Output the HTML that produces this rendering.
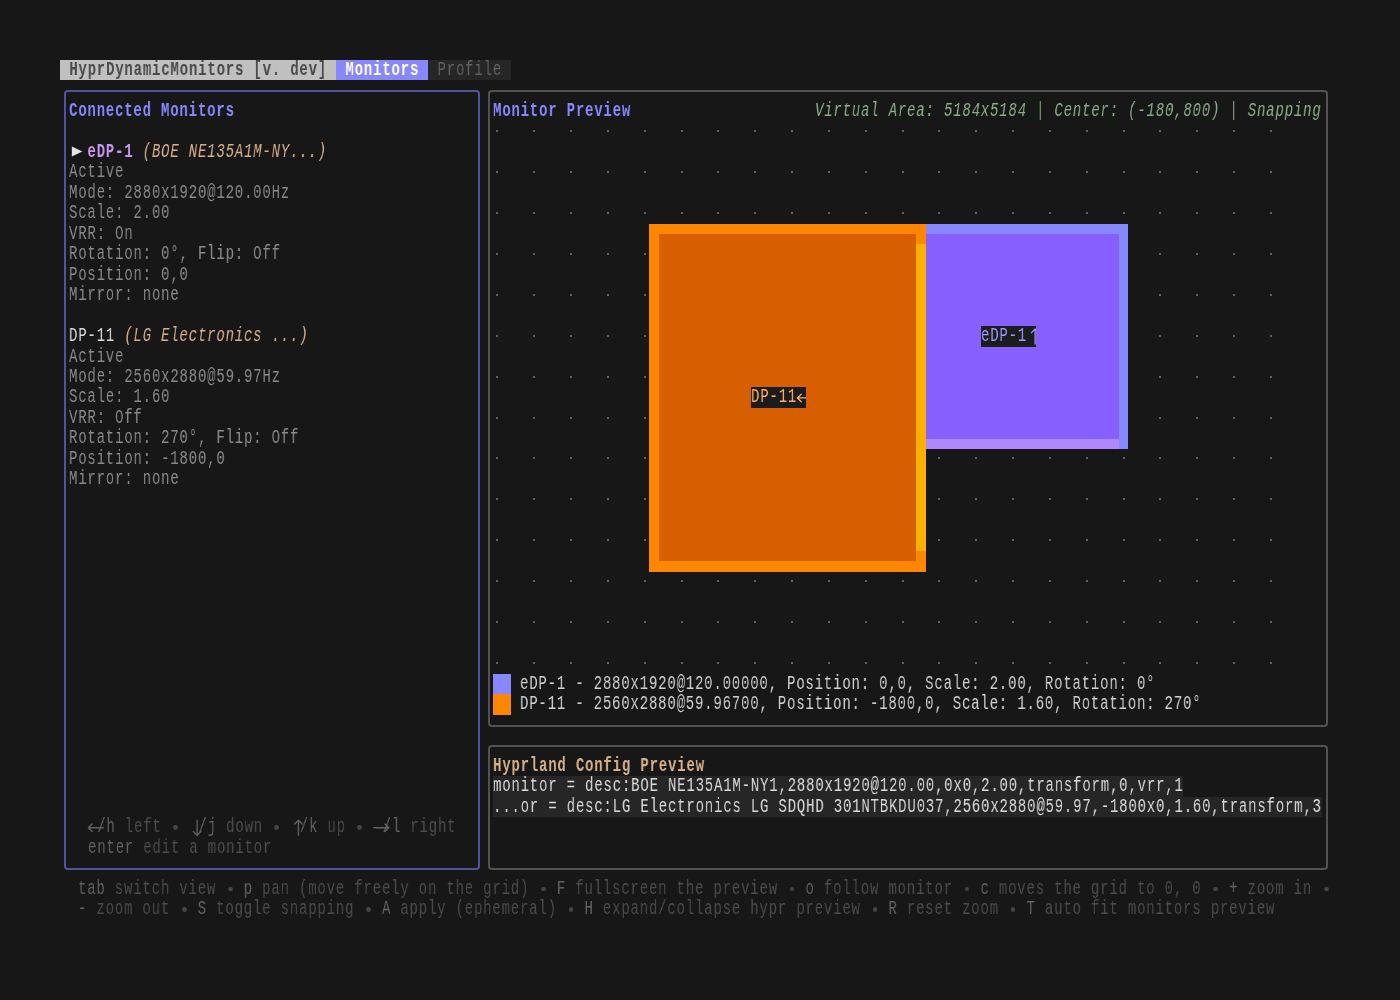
<!DOCTYPE html>
<html><head><meta charset="utf-8"><style>
html,body{margin:0;padding:0;}
body{width:1400px;height:1000px;overflow:hidden;background:#171717;position:relative;}
.r{position:absolute;}
.t{position:absolute;white-space:pre;font-family:"Liberation Mono",monospace;font-size:20.0px;line-height:20.465px;height:20.465px;transform:scaleX(0.70000);letter-spacing:1.1532px;transform-origin:0 0;will-change:transform;}
.bx{position:absolute;box-sizing:border-box;border:2px solid;border-radius:4px;}
.a{position:absolute;left:0;top:0;}
.d{position:absolute;width:2px;height:2px;background:#626262;}
</style></head><body>
<div class="r" style="left:60.00px;top:60.00px;width:276.26px;height:20.47px;background:#c0c0c0;"></div>
<div class="r" style="left:336.26px;top:60.00px;width:92.09px;height:20.47px;background:#8787ff;"></div>
<div class="r" style="left:428.35px;top:60.00px;width:82.88px;height:20.47px;background:#262626;"></div>
<div class="t" style="left:59.90px;top:60.00px;"><span style="color:#4a4a4a;font-weight:bold;"> HyprDynamicMonitors [v. dev] </span><span style="color:#ffffff;font-weight:bold;"> Monitors </span><span style="color:#626262;"> Profile </span></div>
<div class="bx" style="left:64.00px;top:90.10px;width:416.39px;height:779.67px;border-color:#5252a0;"></div>
<div class="bx" style="left:487.60px;top:90.10px;width:839.99px;height:636.42px;border-color:#525252;"></div>
<div class="bx" style="left:487.60px;top:744.98px;width:839.99px;height:124.79px;border-color:#525252;"></div>
<div class="t" style="left:69.11px;top:100.93px;"><span style="color:#8787ff;font-weight:bold;">Connected Monitors</span></div>
<svg class="a" width="1400" height="1000"><path d="M71.8,146.6 L82.4,151.5 L71.8,156.4 Z" fill="#e4e4e4"/></svg>
<div class="t" style="left:69.11px;top:141.86px;"><span style="color:#e4e4e4;">  </span><span style="color:#c896f0;font-weight:bold;">eDP-1</span><span style="color:#8a8a8a;"> </span><span style="color:#d7af87;font-style:italic;">(BOE NE135A1M-NY...)</span></div>
<div class="t" style="left:69.11px;top:162.33px;"><span style="color:#8a8a8a;">Active</span></div>
<div class="t" style="left:69.11px;top:182.79px;"><span style="color:#8a8a8a;">Mode: 2880x1920@120.00Hz</span></div>
<div class="t" style="left:69.11px;top:203.26px;"><span style="color:#8a8a8a;">Scale: 2.00</span></div>
<div class="t" style="left:69.11px;top:223.72px;"><span style="color:#8a8a8a;">VRR: On</span></div>
<div class="t" style="left:69.11px;top:244.19px;"><span style="color:#8a8a8a;">Rotation: 0°, Flip: Off</span></div>
<div class="t" style="left:69.11px;top:264.65px;"><span style="color:#8a8a8a;">Position: 0,0</span></div>
<div class="t" style="left:69.11px;top:285.12px;"><span style="color:#8a8a8a;">Mirror: none</span></div>
<div class="t" style="left:69.11px;top:326.05px;"><span style="color:#dadada;">DP-11</span><span style="color:#8a8a8a;"> </span><span style="color:#d7af87;font-style:italic;">(LG Electronics ...)</span></div>
<div class="t" style="left:69.11px;top:346.51px;"><span style="color:#8a8a8a;">Active</span></div>
<div class="t" style="left:69.11px;top:366.98px;"><span style="color:#8a8a8a;">Mode: 2560x2880@59.97Hz</span></div>
<div class="t" style="left:69.11px;top:387.44px;"><span style="color:#8a8a8a;">Scale: 1.60</span></div>
<div class="t" style="left:69.11px;top:407.91px;"><span style="color:#8a8a8a;">VRR: Off</span></div>
<div class="t" style="left:69.11px;top:428.37px;"><span style="color:#8a8a8a;">Rotation: 270°, Flip: Off</span></div>
<div class="t" style="left:69.11px;top:448.84px;"><span style="color:#8a8a8a;">Position: -1800,0</span></div>
<div class="t" style="left:69.11px;top:469.30px;"><span style="color:#8a8a8a;">Mirror: none</span></div>
<div class="r" style="left:172.71px;top:825.24px;width:4.80px;height:4.80px;border-radius:50%;background:#454545;"></div>
<div class="r" style="left:274.00px;top:825.24px;width:4.80px;height:4.80px;border-radius:50%;background:#454545;"></div>
<div class="r" style="left:356.88px;top:825.24px;width:4.80px;height:4.80px;border-radius:50%;background:#454545;"></div>
<div class="t" style="left:87.53px;top:817.21px;"><span style="color:#626262;"> /h</span><span style="color:#4c4c4c;"> left</span><span style="color:#454545;">   </span><span style="color:#626262;"> /j</span><span style="color:#4c4c4c;"> down</span><span style="color:#454545;">   </span><span style="color:#626262;"> /k</span><span style="color:#4c4c4c;"> up</span><span style="color:#454545;">   </span><span style="color:#626262;"> /l</span><span style="color:#4c4c4c;"> right</span></div>
<svg class="a" width="1400" height="1000"><path d="M88.33453237410072,827.7418604651162 L103.33453237410072,827.7418604651162 M92.13453237410071,823.9418604651163 L88.33453237410072,827.7418604651162 L92.13453237410071,831.5418604651162" stroke="#626262" stroke-width="1.3" fill="none" stroke-linecap="round" stroke-linejoin="round"/></svg>
<svg class="a" width="1400" height="1000"><path d="M197.1294964028777,820.2418604651162 L197.1294964028777,835.2418604651162 M193.32949640287768,831.4418604651163 L197.1294964028777,835.2418604651162 L200.9294964028777,831.4418604651163" stroke="#626262" stroke-width="1.3" fill="none" stroke-linecap="round" stroke-linejoin="round"/></svg>
<svg class="a" width="1400" height="1000"><path d="M298.42446043165467,820.2418604651162 L298.42446043165467,835.2418604651162 M294.62446043165465,824.0418604651162 L298.42446043165467,820.2418604651162 L302.2244604316547,824.0418604651162" stroke="#626262" stroke-width="1.3" fill="none" stroke-linecap="round" stroke-linejoin="round"/></svg>
<svg class="a" width="1400" height="1000"><path d="M373.8021582733813,827.7418604651162 L388.8021582733813,827.7418604651162 M385.00215827338127,823.9418604651163 L388.8021582733813,827.7418604651162 L385.00215827338127,831.5418604651162" stroke="#626262" stroke-width="1.3" fill="none" stroke-linecap="round" stroke-linejoin="round"/></svg>
<div class="t" style="left:87.53px;top:837.67px;"><span style="color:#626262;">enter</span><span style="color:#4c4c4c;"> edit a monitor</span></div>
<div class="r" style="left:227.96px;top:886.64px;width:4.80px;height:4.80px;border-radius:50%;background:#454545;"></div>
<div class="r" style="left:541.05px;top:886.64px;width:4.80px;height:4.80px;border-radius:50%;background:#454545;"></div>
<div class="r" style="left:789.69px;top:886.64px;width:4.80px;height:4.80px;border-radius:50%;background:#454545;"></div>
<div class="r" style="left:964.65px;top:886.64px;width:4.80px;height:4.80px;border-radius:50%;background:#454545;"></div>
<div class="r" style="left:1213.28px;top:886.64px;width:4.80px;height:4.80px;border-radius:50%;background:#454545;"></div>
<div class="r" style="left:1323.79px;top:886.64px;width:4.80px;height:4.80px;border-radius:50%;background:#454545;"></div>
<div class="t" style="left:78.32px;top:878.60px;"><span style="color:#626262;">tab</span><span style="color:#4c4c4c;"> switch view</span><span style="color:#454545;">   </span><span style="color:#626262;">p</span><span style="color:#4c4c4c;"> pan (move freely on the grid)</span><span style="color:#454545;">   </span><span style="color:#626262;">F</span><span style="color:#4c4c4c;"> fullscreen the preview</span><span style="color:#454545;">   </span><span style="color:#626262;">o</span><span style="color:#4c4c4c;"> follow monitor</span><span style="color:#454545;">   </span><span style="color:#626262;">c</span><span style="color:#4c4c4c;"> moves the grid to 0, 0</span><span style="color:#454545;">   </span><span style="color:#626262;">+</span><span style="color:#4c4c4c;"> zoom in</span></div>
<div class="r" style="left:181.92px;top:907.10px;width:4.80px;height:4.80px;border-radius:50%;background:#454545;"></div>
<div class="r" style="left:366.09px;top:907.10px;width:4.80px;height:4.80px;border-radius:50%;background:#454545;"></div>
<div class="r" style="left:568.68px;top:907.10px;width:4.80px;height:4.80px;border-radius:50%;background:#454545;"></div>
<div class="r" style="left:872.56px;top:907.10px;width:4.80px;height:4.80px;border-radius:50%;background:#454545;"></div>
<div class="r" style="left:1010.69px;top:907.10px;width:4.80px;height:4.80px;border-radius:50%;background:#454545;"></div>
<div class="t" style="left:78.32px;top:899.07px;"><span style="color:#626262;">-</span><span style="color:#4c4c4c;"> zoom out</span><span style="color:#454545;">   </span><span style="color:#626262;">S</span><span style="color:#4c4c4c;"> toggle snapping</span><span style="color:#454545;">   </span><span style="color:#626262;">A</span><span style="color:#4c4c4c;"> apply (ephemeral)</span><span style="color:#454545;">   </span><span style="color:#626262;">H</span><span style="color:#4c4c4c;"> expand/collapse hypr preview</span><span style="color:#454545;">   </span><span style="color:#626262;">R</span><span style="color:#4c4c4c;"> reset zoom</span><span style="color:#454545;">   </span><span style="color:#626262;">T</span><span style="color:#4c4c4c;"> auto fit monitors preview</span></div>
<div class="t" style="left:492.71px;top:100.93px;"><span style="color:#8787ff;font-weight:bold;">Monitor Preview</span></div>
<div class="t" style="left:815.01px;top:100.93px;"><span style="color:#87af87;font-style:italic;">Virtual Area: 5184x5184 | Center: (-180,800) | Snapping</span></div>
<div class="d" style="left:496.41px;top:130.03px;"></div>
<div class="d" style="left:533.24px;top:130.03px;"></div>
<div class="d" style="left:570.08px;top:130.03px;"></div>
<div class="d" style="left:606.91px;top:130.03px;"></div>
<div class="d" style="left:643.75px;top:130.03px;"></div>
<div class="d" style="left:680.58px;top:130.03px;"></div>
<div class="d" style="left:717.42px;top:130.03px;"></div>
<div class="d" style="left:754.25px;top:130.03px;"></div>
<div class="d" style="left:791.09px;top:130.03px;"></div>
<div class="d" style="left:827.92px;top:130.03px;"></div>
<div class="d" style="left:864.76px;top:130.03px;"></div>
<div class="d" style="left:901.59px;top:130.03px;"></div>
<div class="d" style="left:938.42px;top:130.03px;"></div>
<div class="d" style="left:975.26px;top:130.03px;"></div>
<div class="d" style="left:1012.09px;top:130.03px;"></div>
<div class="d" style="left:1048.93px;top:130.03px;"></div>
<div class="d" style="left:1085.76px;top:130.03px;"></div>
<div class="d" style="left:1122.60px;top:130.03px;"></div>
<div class="d" style="left:1159.43px;top:130.03px;"></div>
<div class="d" style="left:1196.27px;top:130.03px;"></div>
<div class="d" style="left:1233.10px;top:130.03px;"></div>
<div class="d" style="left:1269.94px;top:130.03px;"></div>
<div class="d" style="left:496.41px;top:170.96px;"></div>
<div class="d" style="left:533.24px;top:170.96px;"></div>
<div class="d" style="left:570.08px;top:170.96px;"></div>
<div class="d" style="left:606.91px;top:170.96px;"></div>
<div class="d" style="left:643.75px;top:170.96px;"></div>
<div class="d" style="left:680.58px;top:170.96px;"></div>
<div class="d" style="left:717.42px;top:170.96px;"></div>
<div class="d" style="left:754.25px;top:170.96px;"></div>
<div class="d" style="left:791.09px;top:170.96px;"></div>
<div class="d" style="left:827.92px;top:170.96px;"></div>
<div class="d" style="left:864.76px;top:170.96px;"></div>
<div class="d" style="left:901.59px;top:170.96px;"></div>
<div class="d" style="left:938.42px;top:170.96px;"></div>
<div class="d" style="left:975.26px;top:170.96px;"></div>
<div class="d" style="left:1012.09px;top:170.96px;"></div>
<div class="d" style="left:1048.93px;top:170.96px;"></div>
<div class="d" style="left:1085.76px;top:170.96px;"></div>
<div class="d" style="left:1122.60px;top:170.96px;"></div>
<div class="d" style="left:1159.43px;top:170.96px;"></div>
<div class="d" style="left:1196.27px;top:170.96px;"></div>
<div class="d" style="left:1233.10px;top:170.96px;"></div>
<div class="d" style="left:1269.94px;top:170.96px;"></div>
<div class="d" style="left:496.41px;top:211.89px;"></div>
<div class="d" style="left:533.24px;top:211.89px;"></div>
<div class="d" style="left:570.08px;top:211.89px;"></div>
<div class="d" style="left:606.91px;top:211.89px;"></div>
<div class="d" style="left:643.75px;top:211.89px;"></div>
<div class="d" style="left:680.58px;top:211.89px;"></div>
<div class="d" style="left:717.42px;top:211.89px;"></div>
<div class="d" style="left:754.25px;top:211.89px;"></div>
<div class="d" style="left:791.09px;top:211.89px;"></div>
<div class="d" style="left:827.92px;top:211.89px;"></div>
<div class="d" style="left:864.76px;top:211.89px;"></div>
<div class="d" style="left:901.59px;top:211.89px;"></div>
<div class="d" style="left:938.42px;top:211.89px;"></div>
<div class="d" style="left:975.26px;top:211.89px;"></div>
<div class="d" style="left:1012.09px;top:211.89px;"></div>
<div class="d" style="left:1048.93px;top:211.89px;"></div>
<div class="d" style="left:1085.76px;top:211.89px;"></div>
<div class="d" style="left:1122.60px;top:211.89px;"></div>
<div class="d" style="left:1159.43px;top:211.89px;"></div>
<div class="d" style="left:1196.27px;top:211.89px;"></div>
<div class="d" style="left:1233.10px;top:211.89px;"></div>
<div class="d" style="left:1269.94px;top:211.89px;"></div>
<div class="d" style="left:496.41px;top:252.82px;"></div>
<div class="d" style="left:533.24px;top:252.82px;"></div>
<div class="d" style="left:570.08px;top:252.82px;"></div>
<div class="d" style="left:606.91px;top:252.82px;"></div>
<div class="d" style="left:643.75px;top:252.82px;"></div>
<div class="d" style="left:680.58px;top:252.82px;"></div>
<div class="d" style="left:717.42px;top:252.82px;"></div>
<div class="d" style="left:754.25px;top:252.82px;"></div>
<div class="d" style="left:791.09px;top:252.82px;"></div>
<div class="d" style="left:827.92px;top:252.82px;"></div>
<div class="d" style="left:864.76px;top:252.82px;"></div>
<div class="d" style="left:901.59px;top:252.82px;"></div>
<div class="d" style="left:938.42px;top:252.82px;"></div>
<div class="d" style="left:975.26px;top:252.82px;"></div>
<div class="d" style="left:1012.09px;top:252.82px;"></div>
<div class="d" style="left:1048.93px;top:252.82px;"></div>
<div class="d" style="left:1085.76px;top:252.82px;"></div>
<div class="d" style="left:1122.60px;top:252.82px;"></div>
<div class="d" style="left:1159.43px;top:252.82px;"></div>
<div class="d" style="left:1196.27px;top:252.82px;"></div>
<div class="d" style="left:1233.10px;top:252.82px;"></div>
<div class="d" style="left:1269.94px;top:252.82px;"></div>
<div class="d" style="left:496.41px;top:293.75px;"></div>
<div class="d" style="left:533.24px;top:293.75px;"></div>
<div class="d" style="left:570.08px;top:293.75px;"></div>
<div class="d" style="left:606.91px;top:293.75px;"></div>
<div class="d" style="left:643.75px;top:293.75px;"></div>
<div class="d" style="left:680.58px;top:293.75px;"></div>
<div class="d" style="left:717.42px;top:293.75px;"></div>
<div class="d" style="left:754.25px;top:293.75px;"></div>
<div class="d" style="left:791.09px;top:293.75px;"></div>
<div class="d" style="left:827.92px;top:293.75px;"></div>
<div class="d" style="left:864.76px;top:293.75px;"></div>
<div class="d" style="left:901.59px;top:293.75px;"></div>
<div class="d" style="left:938.42px;top:293.75px;"></div>
<div class="d" style="left:975.26px;top:293.75px;"></div>
<div class="d" style="left:1012.09px;top:293.75px;"></div>
<div class="d" style="left:1048.93px;top:293.75px;"></div>
<div class="d" style="left:1085.76px;top:293.75px;"></div>
<div class="d" style="left:1122.60px;top:293.75px;"></div>
<div class="d" style="left:1159.43px;top:293.75px;"></div>
<div class="d" style="left:1196.27px;top:293.75px;"></div>
<div class="d" style="left:1233.10px;top:293.75px;"></div>
<div class="d" style="left:1269.94px;top:293.75px;"></div>
<div class="d" style="left:496.41px;top:334.68px;"></div>
<div class="d" style="left:533.24px;top:334.68px;"></div>
<div class="d" style="left:570.08px;top:334.68px;"></div>
<div class="d" style="left:606.91px;top:334.68px;"></div>
<div class="d" style="left:643.75px;top:334.68px;"></div>
<div class="d" style="left:680.58px;top:334.68px;"></div>
<div class="d" style="left:717.42px;top:334.68px;"></div>
<div class="d" style="left:754.25px;top:334.68px;"></div>
<div class="d" style="left:791.09px;top:334.68px;"></div>
<div class="d" style="left:827.92px;top:334.68px;"></div>
<div class="d" style="left:864.76px;top:334.68px;"></div>
<div class="d" style="left:901.59px;top:334.68px;"></div>
<div class="d" style="left:938.42px;top:334.68px;"></div>
<div class="d" style="left:975.26px;top:334.68px;"></div>
<div class="d" style="left:1012.09px;top:334.68px;"></div>
<div class="d" style="left:1048.93px;top:334.68px;"></div>
<div class="d" style="left:1085.76px;top:334.68px;"></div>
<div class="d" style="left:1122.60px;top:334.68px;"></div>
<div class="d" style="left:1159.43px;top:334.68px;"></div>
<div class="d" style="left:1196.27px;top:334.68px;"></div>
<div class="d" style="left:1233.10px;top:334.68px;"></div>
<div class="d" style="left:1269.94px;top:334.68px;"></div>
<div class="d" style="left:496.41px;top:375.61px;"></div>
<div class="d" style="left:533.24px;top:375.61px;"></div>
<div class="d" style="left:570.08px;top:375.61px;"></div>
<div class="d" style="left:606.91px;top:375.61px;"></div>
<div class="d" style="left:643.75px;top:375.61px;"></div>
<div class="d" style="left:680.58px;top:375.61px;"></div>
<div class="d" style="left:717.42px;top:375.61px;"></div>
<div class="d" style="left:754.25px;top:375.61px;"></div>
<div class="d" style="left:791.09px;top:375.61px;"></div>
<div class="d" style="left:827.92px;top:375.61px;"></div>
<div class="d" style="left:864.76px;top:375.61px;"></div>
<div class="d" style="left:901.59px;top:375.61px;"></div>
<div class="d" style="left:938.42px;top:375.61px;"></div>
<div class="d" style="left:975.26px;top:375.61px;"></div>
<div class="d" style="left:1012.09px;top:375.61px;"></div>
<div class="d" style="left:1048.93px;top:375.61px;"></div>
<div class="d" style="left:1085.76px;top:375.61px;"></div>
<div class="d" style="left:1122.60px;top:375.61px;"></div>
<div class="d" style="left:1159.43px;top:375.61px;"></div>
<div class="d" style="left:1196.27px;top:375.61px;"></div>
<div class="d" style="left:1233.10px;top:375.61px;"></div>
<div class="d" style="left:1269.94px;top:375.61px;"></div>
<div class="d" style="left:496.41px;top:416.54px;"></div>
<div class="d" style="left:533.24px;top:416.54px;"></div>
<div class="d" style="left:570.08px;top:416.54px;"></div>
<div class="d" style="left:606.91px;top:416.54px;"></div>
<div class="d" style="left:643.75px;top:416.54px;"></div>
<div class="d" style="left:680.58px;top:416.54px;"></div>
<div class="d" style="left:717.42px;top:416.54px;"></div>
<div class="d" style="left:754.25px;top:416.54px;"></div>
<div class="d" style="left:791.09px;top:416.54px;"></div>
<div class="d" style="left:827.92px;top:416.54px;"></div>
<div class="d" style="left:864.76px;top:416.54px;"></div>
<div class="d" style="left:901.59px;top:416.54px;"></div>
<div class="d" style="left:938.42px;top:416.54px;"></div>
<div class="d" style="left:975.26px;top:416.54px;"></div>
<div class="d" style="left:1012.09px;top:416.54px;"></div>
<div class="d" style="left:1048.93px;top:416.54px;"></div>
<div class="d" style="left:1085.76px;top:416.54px;"></div>
<div class="d" style="left:1122.60px;top:416.54px;"></div>
<div class="d" style="left:1159.43px;top:416.54px;"></div>
<div class="d" style="left:1196.27px;top:416.54px;"></div>
<div class="d" style="left:1233.10px;top:416.54px;"></div>
<div class="d" style="left:1269.94px;top:416.54px;"></div>
<div class="d" style="left:496.41px;top:457.47px;"></div>
<div class="d" style="left:533.24px;top:457.47px;"></div>
<div class="d" style="left:570.08px;top:457.47px;"></div>
<div class="d" style="left:606.91px;top:457.47px;"></div>
<div class="d" style="left:643.75px;top:457.47px;"></div>
<div class="d" style="left:680.58px;top:457.47px;"></div>
<div class="d" style="left:717.42px;top:457.47px;"></div>
<div class="d" style="left:754.25px;top:457.47px;"></div>
<div class="d" style="left:791.09px;top:457.47px;"></div>
<div class="d" style="left:827.92px;top:457.47px;"></div>
<div class="d" style="left:864.76px;top:457.47px;"></div>
<div class="d" style="left:901.59px;top:457.47px;"></div>
<div class="d" style="left:938.42px;top:457.47px;"></div>
<div class="d" style="left:975.26px;top:457.47px;"></div>
<div class="d" style="left:1012.09px;top:457.47px;"></div>
<div class="d" style="left:1048.93px;top:457.47px;"></div>
<div class="d" style="left:1085.76px;top:457.47px;"></div>
<div class="d" style="left:1122.60px;top:457.47px;"></div>
<div class="d" style="left:1159.43px;top:457.47px;"></div>
<div class="d" style="left:1196.27px;top:457.47px;"></div>
<div class="d" style="left:1233.10px;top:457.47px;"></div>
<div class="d" style="left:1269.94px;top:457.47px;"></div>
<div class="d" style="left:496.41px;top:498.40px;"></div>
<div class="d" style="left:533.24px;top:498.40px;"></div>
<div class="d" style="left:570.08px;top:498.40px;"></div>
<div class="d" style="left:606.91px;top:498.40px;"></div>
<div class="d" style="left:643.75px;top:498.40px;"></div>
<div class="d" style="left:680.58px;top:498.40px;"></div>
<div class="d" style="left:717.42px;top:498.40px;"></div>
<div class="d" style="left:754.25px;top:498.40px;"></div>
<div class="d" style="left:791.09px;top:498.40px;"></div>
<div class="d" style="left:827.92px;top:498.40px;"></div>
<div class="d" style="left:864.76px;top:498.40px;"></div>
<div class="d" style="left:901.59px;top:498.40px;"></div>
<div class="d" style="left:938.42px;top:498.40px;"></div>
<div class="d" style="left:975.26px;top:498.40px;"></div>
<div class="d" style="left:1012.09px;top:498.40px;"></div>
<div class="d" style="left:1048.93px;top:498.40px;"></div>
<div class="d" style="left:1085.76px;top:498.40px;"></div>
<div class="d" style="left:1122.60px;top:498.40px;"></div>
<div class="d" style="left:1159.43px;top:498.40px;"></div>
<div class="d" style="left:1196.27px;top:498.40px;"></div>
<div class="d" style="left:1233.10px;top:498.40px;"></div>
<div class="d" style="left:1269.94px;top:498.40px;"></div>
<div class="d" style="left:496.41px;top:539.33px;"></div>
<div class="d" style="left:533.24px;top:539.33px;"></div>
<div class="d" style="left:570.08px;top:539.33px;"></div>
<div class="d" style="left:606.91px;top:539.33px;"></div>
<div class="d" style="left:643.75px;top:539.33px;"></div>
<div class="d" style="left:680.58px;top:539.33px;"></div>
<div class="d" style="left:717.42px;top:539.33px;"></div>
<div class="d" style="left:754.25px;top:539.33px;"></div>
<div class="d" style="left:791.09px;top:539.33px;"></div>
<div class="d" style="left:827.92px;top:539.33px;"></div>
<div class="d" style="left:864.76px;top:539.33px;"></div>
<div class="d" style="left:901.59px;top:539.33px;"></div>
<div class="d" style="left:938.42px;top:539.33px;"></div>
<div class="d" style="left:975.26px;top:539.33px;"></div>
<div class="d" style="left:1012.09px;top:539.33px;"></div>
<div class="d" style="left:1048.93px;top:539.33px;"></div>
<div class="d" style="left:1085.76px;top:539.33px;"></div>
<div class="d" style="left:1122.60px;top:539.33px;"></div>
<div class="d" style="left:1159.43px;top:539.33px;"></div>
<div class="d" style="left:1196.27px;top:539.33px;"></div>
<div class="d" style="left:1233.10px;top:539.33px;"></div>
<div class="d" style="left:1269.94px;top:539.33px;"></div>
<div class="d" style="left:496.41px;top:580.26px;"></div>
<div class="d" style="left:533.24px;top:580.26px;"></div>
<div class="d" style="left:570.08px;top:580.26px;"></div>
<div class="d" style="left:606.91px;top:580.26px;"></div>
<div class="d" style="left:643.75px;top:580.26px;"></div>
<div class="d" style="left:680.58px;top:580.26px;"></div>
<div class="d" style="left:717.42px;top:580.26px;"></div>
<div class="d" style="left:754.25px;top:580.26px;"></div>
<div class="d" style="left:791.09px;top:580.26px;"></div>
<div class="d" style="left:827.92px;top:580.26px;"></div>
<div class="d" style="left:864.76px;top:580.26px;"></div>
<div class="d" style="left:901.59px;top:580.26px;"></div>
<div class="d" style="left:938.42px;top:580.26px;"></div>
<div class="d" style="left:975.26px;top:580.26px;"></div>
<div class="d" style="left:1012.09px;top:580.26px;"></div>
<div class="d" style="left:1048.93px;top:580.26px;"></div>
<div class="d" style="left:1085.76px;top:580.26px;"></div>
<div class="d" style="left:1122.60px;top:580.26px;"></div>
<div class="d" style="left:1159.43px;top:580.26px;"></div>
<div class="d" style="left:1196.27px;top:580.26px;"></div>
<div class="d" style="left:1233.10px;top:580.26px;"></div>
<div class="d" style="left:1269.94px;top:580.26px;"></div>
<div class="d" style="left:496.41px;top:621.19px;"></div>
<div class="d" style="left:533.24px;top:621.19px;"></div>
<div class="d" style="left:570.08px;top:621.19px;"></div>
<div class="d" style="left:606.91px;top:621.19px;"></div>
<div class="d" style="left:643.75px;top:621.19px;"></div>
<div class="d" style="left:680.58px;top:621.19px;"></div>
<div class="d" style="left:717.42px;top:621.19px;"></div>
<div class="d" style="left:754.25px;top:621.19px;"></div>
<div class="d" style="left:791.09px;top:621.19px;"></div>
<div class="d" style="left:827.92px;top:621.19px;"></div>
<div class="d" style="left:864.76px;top:621.19px;"></div>
<div class="d" style="left:901.59px;top:621.19px;"></div>
<div class="d" style="left:938.42px;top:621.19px;"></div>
<div class="d" style="left:975.26px;top:621.19px;"></div>
<div class="d" style="left:1012.09px;top:621.19px;"></div>
<div class="d" style="left:1048.93px;top:621.19px;"></div>
<div class="d" style="left:1085.76px;top:621.19px;"></div>
<div class="d" style="left:1122.60px;top:621.19px;"></div>
<div class="d" style="left:1159.43px;top:621.19px;"></div>
<div class="d" style="left:1196.27px;top:621.19px;"></div>
<div class="d" style="left:1233.10px;top:621.19px;"></div>
<div class="d" style="left:1269.94px;top:621.19px;"></div>
<div class="d" style="left:496.41px;top:662.12px;"></div>
<div class="d" style="left:533.24px;top:662.12px;"></div>
<div class="d" style="left:570.08px;top:662.12px;"></div>
<div class="d" style="left:606.91px;top:662.12px;"></div>
<div class="d" style="left:643.75px;top:662.12px;"></div>
<div class="d" style="left:680.58px;top:662.12px;"></div>
<div class="d" style="left:717.42px;top:662.12px;"></div>
<div class="d" style="left:754.25px;top:662.12px;"></div>
<div class="d" style="left:791.09px;top:662.12px;"></div>
<div class="d" style="left:827.92px;top:662.12px;"></div>
<div class="d" style="left:864.76px;top:662.12px;"></div>
<div class="d" style="left:901.59px;top:662.12px;"></div>
<div class="d" style="left:938.42px;top:662.12px;"></div>
<div class="d" style="left:975.26px;top:662.12px;"></div>
<div class="d" style="left:1012.09px;top:662.12px;"></div>
<div class="d" style="left:1048.93px;top:662.12px;"></div>
<div class="d" style="left:1085.76px;top:662.12px;"></div>
<div class="d" style="left:1122.60px;top:662.12px;"></div>
<div class="d" style="left:1159.43px;top:662.12px;"></div>
<div class="d" style="left:1196.27px;top:662.12px;"></div>
<div class="d" style="left:1233.10px;top:662.12px;"></div>
<div class="d" style="left:1269.94px;top:662.12px;"></div>
<div class="r" style="left:649.35px;top:223.72px;width:276.26px;height:347.91px;background:#d75f00;"></div>
<div class="r" style="left:649.35px;top:223.72px;width:276.26px;height:10.23px;background:#ff8700;"></div>
<div class="r" style="left:649.35px;top:561.40px;width:276.26px;height:10.23px;background:#ff8700;"></div>
<div class="r" style="left:649.35px;top:223.72px;width:9.21px;height:347.91px;background:#ff8700;"></div>
<div class="r" style="left:916.40px;top:223.72px;width:9.21px;height:20.47px;background:#ff8700;"></div>
<div class="r" style="left:916.40px;top:244.19px;width:9.21px;height:306.98px;background:#ffaf00;"></div>
<div class="r" style="left:916.40px;top:551.16px;width:9.21px;height:20.47px;background:#ff8700;"></div>
<div class="r" style="left:925.61px;top:223.72px;width:202.59px;height:225.12px;background:#875fff;"></div>
<div class="r" style="left:925.61px;top:223.72px;width:202.59px;height:10.23px;background:#8787ff;"></div>
<div class="r" style="left:925.61px;top:438.60px;width:193.38px;height:10.23px;background:#af87ff;"></div>
<div class="r" style="left:1118.99px;top:223.72px;width:9.21px;height:225.12px;background:#8787ff;"></div>
<div class="r" style="left:750.65px;top:387.44px;width:55.25px;height:20.47px;background:#1c1c1c;"></div>
<div class="t" style="left:750.55px;top:387.44px;"><span style="color:#ffaf5f;">DP-11</span></div>
<svg class="a" width="1400" height="1000" style="clip-path:inset(0 594.10px 0 0)"><path d="M797.3992805755395,397.9744186046512 L812.3992805755395,397.9744186046512 M801.1992805755394,394.1744186046512 L797.3992805755395,397.9744186046512 L801.1992805755394,401.7744186046512" stroke="#ffaf5f" stroke-width="1.3" fill="none" stroke-linecap="round" stroke-linejoin="round"/></svg>
<div class="r" style="left:980.86px;top:326.05px;width:55.25px;height:20.47px;background:#1c1c1c;"></div>
<div class="t" style="left:980.77px;top:326.05px;"><span style="color:#9999ff;">eDP-1</span></div>
<svg class="a" width="1400" height="1000" style="clip-path:inset(0 363.88px 0 0)"><path d="M1035.115107913669,329.07906976744187 L1035.115107913669,344.07906976744187 M1031.315107913669,332.8790697674419 L1035.115107913669,329.07906976744187 L1038.9151079136689,332.8790697674419" stroke="#9999ff" stroke-width="1.3" fill="none" stroke-linecap="round" stroke-linejoin="round"/></svg>
<div class="r" style="left:492.81px;top:673.95px;width:18.42px;height:20.47px;background:#8787ff;"></div>
<div class="r" style="left:492.81px;top:694.42px;width:18.42px;height:20.47px;background:#ff8700;"></div>
<div class="t" style="left:520.34px;top:673.95px;"><span style="color:#d0d0d0;">eDP-1 - 2880x1920@120.00000, Position: 0,0, Scale: 2.00, Rotation: 0°</span></div>
<div class="t" style="left:520.34px;top:694.42px;"><span style="color:#d0d0d0;">DP-11 - 2560x2880@59.96700, Position: -1800,0, Scale: 1.60, Rotation: 270°</span></div>
<div class="t" style="left:492.71px;top:755.81px;"><span style="color:#d7af87;font-weight:bold;">Hyprland Config Preview</span></div>
<div class="r" style="left:492.81px;top:776.28px;width:690.65px;height:20.47px;background:#262626;"></div>
<div class="r" style="left:492.81px;top:796.74px;width:828.78px;height:20.47px;background:#262626;"></div>
<div class="t" style="left:492.71px;top:776.28px;"><span style="color:#dadada;">monitor = desc:BOE NE135A1M-NY1,2880x1920@120.00,0x0,2.00,transform,0,vrr,1</span></div>
<div class="t" style="left:492.71px;top:796.74px;"><span style="color:#dadada;">...or = desc:LG Electronics LG SDQHD 301NTBKDU037,2560x2880@59.97,-1800x0,1.60,transform,3</span></div>
</body></html>
